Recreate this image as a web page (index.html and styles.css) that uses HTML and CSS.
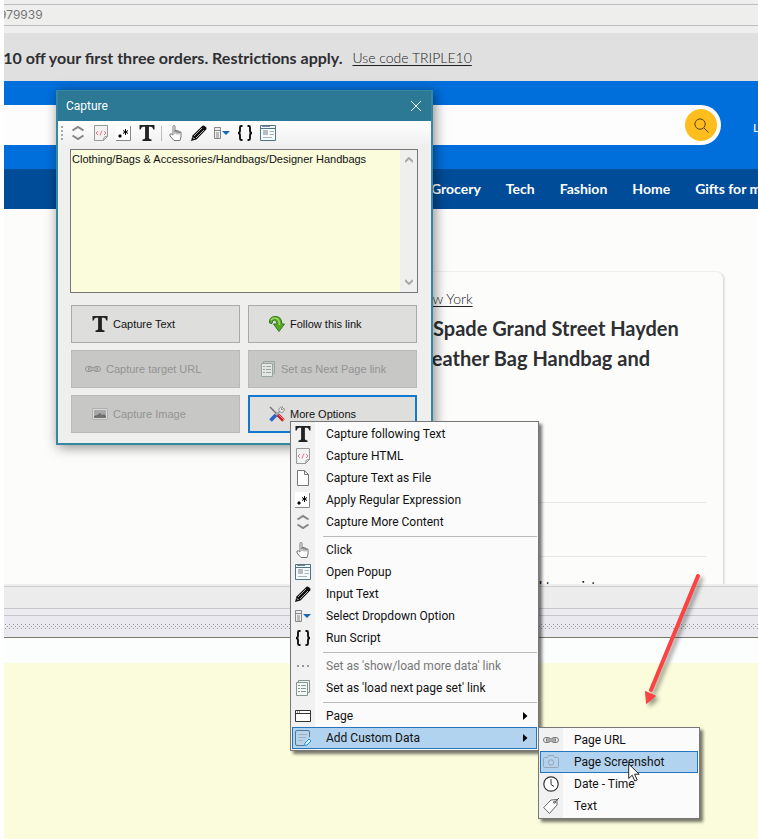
FILE: index.html
```html
<!DOCTYPE html>
<html lang="en">
<head>
<meta charset="utf-8">
<meta name="viewport" content="width=device-width">
<title>Capture</title>
<link rel="stylesheet" href="styles.css">
</head>
<body>
<svg class="sprite" aria-hidden="true">
  <symbol id="more" viewBox="0 0 16 16"><path d="M2.500 5.500L8 2l5.500 3.500M2.500 10.500L8 14l5.500-3.500" fill="none" stroke="#858585" stroke-width="2"/></symbol>
  <symbol id="html" viewBox="0 0 16 16"><path d="M1.500.5h13v11l-4 4h-9z" fill="#f2f2f2" stroke="#999"/><path d="M14.500 11.500q-4-1-4 4z" fill="#ddd" stroke="#999"/><path d="M5 6L3 8l2 2M11 6l2 2-2 2M9 5.500l-2 5" fill="none" stroke="#e8788c"/></symbol>
  <symbol id="regex" viewBox="0 0 16 16"><path d="M0 0h15v15H0z" fill="#fff"/><path d="M14.500 1v14.500H0" fill="none" stroke="#888"/><path d="M3 10h2v2H3z" fill="#000" stroke="#000"/><path d="M9.500 4v6M7 5.500l5 3M12 5.500l-5 3" stroke="#000"/></symbol>
  <symbol id="tee" viewBox="0 0 16 16"><path d="M.5 0h15v4.500h-1.200Q13.700 1.800 12 1.800H9.900V13q0 1.400 2.600 1.500V16h-9v-1.500Q6.100 14.400 6.100 13V1.800H4Q2.300 1.800 1.700 4.500H.5z" fill="#222"/></symbol>
  <symbol id="hand" viewBox="0 0 16 16"><path d="M5 10V1.500q0-1 1-1t1 1V7V5.500h2V7.500V6h2v2V7h2v5l-1 3.500H6L2 11V9h1.500z" fill="#fff" stroke="#777"/><path d="M7 6v3M9 7v2.500M11 7v2.500" stroke="#888"/></symbol>
  <symbol id="pencil" viewBox="0 0 16 16"><path d="M0 16l1.500-5.500L11.500.8q1-.8 2.200.2l1.300 1.300q1 1.200.2 2.200L5.500 14.500z" fill="#111"/><path d="M3 11L11 3M5 13l8-8" stroke="#aaa"/><path d="M2 12.500L3.500 14" stroke="#fff"/></symbol>
  <symbol id="drop" viewBox="0 0 16 16"><path d="M.5 2.500h6v11h-6zM.5 5.500h6M2 8h3M2 10h3M2 12h3" fill="#eee" stroke="#888"/><path d="M8 6h8l-4 4z" fill="#1668b5"/></symbol>
  <symbol id="braces" viewBox="0 0 16 16"><path d="M5.500 1H4Q3 1 3 2.500v3Q3 8 1 8q2 0 2 2.500v3Q3 15 4 15h1.500M10.500 1H12q1 0 1 1.500v3Q13 8 15 8q-2 0-2 2.500v3q0 1.500-1 1.500h-1.500" fill="none" stroke="#111" stroke-width="1.900"/></symbol>
  <symbol id="popup" viewBox="0 0 16 16"><path d="M.5.5h15v15H.5z" fill="#f5fafb" stroke="#527584"/><path d="M1 3.500h14" stroke="#527584"/><path d="M2 1.500h8" stroke="#789"/><path d="M3 5h5v5H3z" fill="#b5bdc2"/><path d="M9.500 6.500H14M9.500 9.500H14M3 12.500h9" stroke="#aab4b9"/></symbol>
  <symbol id="file" viewBox="0 0 16 16"><path d="M2.500.5h7l4 4v11h-11zM9.500.5v4h4" fill="#fff" stroke="#777"/></symbol>
  <symbol id="dots" viewBox="0 0 16 16"><path d="M2 7h2v2H2zM7 7h2v2H7zM12 7h2v2h-2z" fill="#999"/></symbol>
  <symbol id="pages" viewBox="0 0 16 16"><path d="M3.500 2.500v-2h11v12h-2" fill="none" stroke="#829790"/><path d="M1.500 2.500h11v13h-11z" fill="#f4f7f5" stroke="#829790"/><path d="M3 5.500h2M3 8.500h2M3 11.500h2M6 5.500h5M6 8.500h5M6 11.500h5" stroke="#829790"/></symbol>
  <symbol id="window" viewBox="0 0 16 16"><path d="M.5 2.500h15v11H.5zM.5 5.500h15" fill="#fff" stroke="#333"/><path d="M2 4h4" stroke="#333" stroke-dasharray="1 1"/></symbol>
  <symbol id="note" viewBox="0 0 16 16"><path d="M14.500 7V2q0-1.500-1.500-1.500H2Q.5.500.5 2v12Q.5 15.500 2 15.500h7" fill="#b9d3ea" stroke="#52798f"/><path d="M3 4.500h9M3 7.500h8M3 10.500h5" stroke="#9ab4c8"/><path d="M9.500 15.500l.5-2.500 4-4 2 2-4 4z" fill="#dff2ff" stroke="#1e91d6"/></symbol>
  <symbol id="link" viewBox="0 0 16 16"><rect x=".5" y="5.500" width="7" height="5" rx="2.500" fill="none" stroke="#777"/><rect x="8.500" y="5.500" width="7" height="5" rx="2.500" fill="none" stroke="#777"/><path d="M3 8h10" stroke="#777" stroke-width="3"/><path d="M4 8h8" stroke="#ddd"/></symbol>
  <symbol id="camera" viewBox="0 0 16 16"><path d="M.5 4.500q0-1 1-1h3l1-2h5l1 2h3q1 0 1 1v8q0 1-1 1h-13q-1 0-1-1z" fill="none" stroke="#9aa6b2"/><circle cx="8" cy="8.500" r="2.700" fill="none" stroke="#9aa6b2"/></symbol>
  <symbol id="clock" viewBox="0 0 16 16"><circle cx="8" cy="8" r="7.200" fill="#fff" stroke="#333" stroke-width="1.200"/><path d="M8 3v5.500l3 2" fill="none" stroke="#333"/></symbol>
  <symbol id="tag" viewBox="0 0 16 16"><path d="M.7 9.500L8 2l6-.5L14 7l-7.500 8.500z" fill="#fff" stroke="#666"/><circle cx="11.500" cy="4.300" r="1" fill="none" stroke="#555"/><path d="M11.500 4.300L16 0" stroke="#555"/></symbol>
  <symbol id="image" viewBox="0 0 16 16"><path d="M.5 2.500h15v11H.5z" fill="#e5e5e5" stroke="#a5a5a5"/><path d="M2 4h12v8H2z" fill="#999"/><path d="M2 12v-2l3-1 3-2 2 2 2-1 2 2v2z" fill="#444"/></symbol>
  <symbol id="follow" viewBox="0 0 16 16"><path d="M.5 7Q-.2 1.500 5 .6Q12.500-.5 13 8h2.500L10 15.500 4.500 8H8Q8 4.500 5.500 4.200Q3 4 3 7.500z" fill="#55a927" stroke="#34771a"/><path d="M2 4Q4 1.500 7 2.200Q10.500 3 10.500 9" fill="none" stroke="#9dd66b" stroke-width="1.500"/></symbol>
  <symbol id="tools" viewBox="0 0 16 16"><path d="M1 1l7 7" stroke="#777" stroke-width="1.500"/><path d="M8.500 8.500l6 6" stroke="#d4201f" stroke-width="3.500"/><path d="M9.500 8.500l5.500 5.500" stroke="#f3a09c"/><path d="M7 9l4-4" stroke="#aaa" stroke-width="2"/><path d="M14 1l-2 2 1 1 2-2q1 3-1 4.200Q12 7.200 10.500 5.500Q9 4 10.500 2 12 .5 14 1z" fill="#e5e5e5" stroke="#888" stroke-width=".8"/><path d="M7 9l-5.500 5.500" stroke="#2865c5" stroke-width="3.800"/></symbol>
  <symbol id="arrow" viewBox="0 0 16 16"><path d="M6 4l4.500 4L6 12z" fill="#000"/></symbol>
</svg>

<div class="screen">
  <div class="address"><span>979939</span></div>
  <div class="promo"><strong>$10 off your first three orders. Restrictions apply.</strong><a href="#">Use code TRIPLE10</a></div>
  <header class="masthead">
    <form class="search">
      <input type="search" aria-label="Search">
      <button type="button" aria-label="Search"><svg viewBox="0 0 16 16"><circle cx="6.500" cy="6.500" r="5.500"/><path d="M10.500 10.500l5 5"/></svg></button>
    </form>
    <a class="lists" href="#">L</a>
  </header>
  <nav class="departments"><a href="#">Grocery</a><a href="#">Tech</a><a href="#">Fashion</a><a href="#">Home</a><a href="#">Gifts for m</a></nav>
  <main class="content">
    <article class="product">
      <a class="brand" href="#">New York</a>
      <h1><span>Spade Grand Street Hayden</span><span class="second">Leather Bag Handbag and</span></h1>
      <div class="row"></div>
      <div class="row"></div>
      <p>Add to registry</p>
    </article>
  </main>
  <div class="statusbar"></div>
  <div class="gap"></div>
  <div class="splitter"></div>
  <div class="blank"></div>
  <div class="results"></div>
</div>

<section class="dialog" aria-label="Capture">
  <div class="titlebar"><span>Capture</span><button type="button" aria-label="Close"><svg viewBox="0 0 12 12"><path d="M1 1l10 10M11 1L1 11"/></svg></button></div>
  <div class="toolbar">
    <span class="grip"></span>
    <button type="button" aria-label="More content"><svg><use href="#more"/></svg></button>
    <button type="button" aria-label="HTML"><svg><use href="#html"/></svg></button>
    <button type="button" aria-label="Regular expression"><svg><use href="#regex"/></svg></button>
    <button type="button" aria-label="Text"><svg><use href="#tee"/></svg></button>
    <span class="divider"></span>
    <button type="button" aria-label="Click"><svg><use href="#hand"/></svg></button>
    <button type="button" aria-label="Input text"><svg><use href="#pencil"/></svg></button>
    <button type="button" aria-label="Select option"><svg><use href="#drop"/></svg></button>
    <button type="button" aria-label="Run script"><svg><use href="#braces"/></svg></button>
    <button type="button" aria-label="Open popup"><svg><use href="#popup"/></svg></button>
  </div>
  <div class="preview">
    <textarea aria-label="Captured content">Clothing/Bags &amp; Accessories/Handbags/Designer Handbags</textarea>
    <div class="scroll"><svg viewBox="0 0 8 6"><path d="M0 5l4-4 4 4"/></svg><svg viewBox="0 0 8 6"><path d="M0 1l4 4 4-4"/></svg></div>
  </div>
  <div class="actions">
    <div class="column">
      <button type="button" class="inset"><svg><use href="#tee"/></svg>Capture Text</button>
      <button type="button" disabled><svg><use href="#link"/></svg>Capture target URL</button>
      <button type="button" class="inset" disabled><svg><use href="#image"/></svg>Capture Image</button>
    </div>
    <div class="column right">
      <button type="button" class="inset"><svg><use href="#follow"/></svg>Follow this link</button>
      <button type="button" disabled><svg><use href="#pages"/></svg>Set as Next Page link</button>
      <button type="button" class="inset focus"><svg><use href="#tools"/></svg>More Options</button>
    </div>
  </div>
</section>

<div class="menu main-menu">
  <button type="button"><svg><use href="#tee"/></svg>Capture following Text</button>
  <button type="button"><svg><use href="#html"/></svg>Capture HTML</button>
  <button type="button"><svg><use href="#file"/></svg>Capture Text as File</button>
  <button type="button"><svg><use href="#regex"/></svg>Apply Regular Expression</button>
  <button type="button"><svg><use href="#more"/></svg>Capture More Content</button>
  <hr>
  <button type="button"><svg><use href="#hand"/></svg>Click</button>
  <button type="button"><svg><use href="#popup"/></svg>Open Popup</button>
  <button type="button"><svg><use href="#pencil"/></svg>Input Text</button>
  <button type="button"><svg><use href="#drop"/></svg>Select Dropdown Option</button>
  <button type="button"><svg><use href="#braces"/></svg>Run Script</button>
  <hr>
  <button type="button" disabled><svg><use href="#dots"/></svg>Set as 'show/load more data' link</button>
  <button type="button"><svg><use href="#pages"/></svg>Set as 'load next page set' link</button>
  <hr>
  <button type="button"><svg><use href="#window"/></svg>Page<svg class="more"><use href="#arrow"/></svg></button>
  <button type="button" class="selected"><svg><use href="#note"/></svg>Add Custom Data<svg class="more"><use href="#arrow"/></svg></button>
</div>

<div class="menu sub-menu">
  <button type="button"><svg><use href="#link"/></svg>Page URL</button>
  <button type="button" class="selected"><svg><use href="#camera"/></svg>Page Screenshot</button>
  <button type="button"><svg><use href="#clock"/></svg>Date - Time</button>
  <button type="button"><svg><use href="#tag"/></svg>Text</button>
</div>

<svg class="pointer" viewBox="0 0 12 19" aria-hidden="true"><path d="M.7 1v14.500l3.500-3.300 2.600 5.800 2.400-1L6.600 11.200h4.600z" fill="#fff" stroke="#222"/></svg>
<svg class="callout" viewBox="0 0 70 146" aria-hidden="true"><path d="M58 6L11 120" stroke="#fc4343" stroke-width="4" stroke-linecap="round"/><path d="M5.500 121.500l10 4.500L6.500 133.500z" fill="#fc4343" stroke="#fc4343"/></svg>
</body>
</html>
```
FILE: styles.css
```css
* { box-sizing: border-box; }
body { margin: 0; min-height: 100vh; background: #fff; overflow: hidden; font-family: "Liberation Sans", sans-serif; }
button { font: inherit; color: inherit; border: 0; padding: 0; background: none; }
svg { width: 16px; height: 16px; flex: none; }
.sprite { position: absolute; width: 0; height: 0; }

.screen { min-height: 100vh; margin-left: 4px; display: flex; flex-direction: column; overflow: hidden; font-family: Lato, sans-serif; color: #2e2f32; }
.address { height: 33px; padding: 4px 0 7px; background: #eee; flex: none; font: 12px/20px Inter, sans-serif; color: #777; }
.address span { display: block; height: 22px; border: solid #bdbdbd; border-width: 1px 0; background: #eeeeec; text-indent: -5px; }
.promo { height: 48px; flex: none; display: flex; align-items: center; gap: 10px; padding-left: 6px; background: #e0e0e0; font-size: 16px; white-space: nowrap; margin-left: -16px; }
.promo strong { font-weight: 700; }
.promo a { color: #222; font-size: 14px; font-weight: 300; text-underline-offset: 2px; }
.masthead { height: 88px; flex: none; display: flex; align-items: center; gap: 32px; background: #006fdc; overflow: hidden; }
.search { height: 40px; flex: 1; display: flex; align-items: center; padding-right: 4px; background: #fdfdfd; border-radius: 0 20px 20px 0; }
.search input { flex: 1; min-width: 0; border: 0; background: none; height: 32px; }
.search button { width: 32px; height: 32px; border-radius: 50%; background: #ffbd1e; display: grid; place-items: center; }
.search svg { width: 15px; height: 15px; fill: none; stroke: #463816; }
.lists { color: #fff; font-size: 12px; font-weight: 400; text-decoration: none; width: 5px; padding-top: 4px; }
.departments { height: 40px; flex: none; display: flex; align-items: center; gap: 25px; padding: 0 0 2px 427px; background: #004c98; font-size: 14px; font-weight: 700; white-space: nowrap; }
.departments a { color: #fff; text-decoration: none; }
.content { height: 375px; flex: none; padding: 62px 34px 0 52px; background: #fcfdfb; overflow: hidden; }
.product { height: 340px; border: 1px solid #eee; border-left: 0; border-right-color: #ddd; border-radius: 8px; box-shadow: 1px 1px 2px #e5e5e5; padding: 18px 17px 0 357px; }
.brand { display: block; font-size: 14px; font-weight: 300; line-height: 18px; text-indent: 2px; color: #222; text-underline-offset: 2px; }
h1 { margin: 5px 0 0; font-size: 20px; line-height: 30px; white-space: nowrap; }
h1 span { display: block; text-indent: 20px; }
h1 .second { text-indent: 9px; }
.row { height: 54px; border-bottom: 1px solid #e7e7e7; }
.row:first-of-type { height: 130px; }
.product p { margin: 19px 0 0; padding-left: 104px; font-size: 14px; line-height: 20px; color: #000; }
.statusbar { height: 25px; flex: none; border-top: 2px solid #eee; border-bottom: 1px solid #c7c7cb; background: linear-gradient(#cfcfcb 1px, #ececec 1px); }
.gap { height: 7px; flex: none; background: #ebebf0; border-bottom: 1px solid #c7c7cb; }
.splitter { height: 22px; flex: none; padding: 8px 0; border-bottom: 1px solid #7b7b6d; background: #eae9ef; }
.splitter::before { content: ""; display: block; height: 5px; --dot: linear-gradient(90deg, #999 1px, #0000 1px); background: var(--dot) 1px 0/4px 1px repeat-x, var(--dot) 3px 2px/4px 1px repeat-x, var(--dot) 1px 4px/4px 1px repeat-x; }
.blank { height: 25px; flex: none; background: #fcfdfd; }
.results { flex: 1; background: #fafcdc; }

.dialog { position: absolute; left: 56px; top: 90px; width: 377px; border: 2px solid #3488a0; border-top: 0; background: #efefee; box-shadow: 2px 2px 12px #0007; font-size: 12px; padding-bottom: 10px; }
.titlebar { height: 31px; display: flex; align-items: center; justify-content: space-between; padding: 0 9px 0 8px; border-top: 1px solid #3488a0; background: #2b7994; color: #fff; font: 12px Roboto, sans-serif; }
.titlebar svg { display: block; width: 12px; height: 12px; stroke: #fff; fill: none; }
.toolbar { height: 24px; display: flex; align-items: center; gap: 7px; padding-left: 3px; background: linear-gradient(#fff, #f0f0f0); }
.toolbar svg { display: block; }
.grip { width: 2px; height: 14px; background: repeating-linear-gradient(#aaa 0 2px, #fff0 2px 4px); }
.divider { width: 1px; height: 15px; margin: 0 -1px; background: #bbb; }
.preview { margin: 4px 13px 0 12px; height: 144px; display: flex; border: 1px solid #777; background: #fafcdc; }
.preview textarea { flex: 1; min-width: 0; border: 0; padding: 2px 1px; resize: none; overflow: hidden; background: none; font: 11px/14px "Liberation Sans", sans-serif; color: #111; }
.scroll { width: 17px; display: flex; flex-direction: column; justify-content: space-between; align-items: center; padding: 7px 0; background: #efefef; }
.scroll svg { width: 8px; height: 6px; fill: none; stroke: #aaa; stroke-width: 2; }
.actions { display: grid; grid-template-columns: 1fr 1fr; gap: 8px; margin: 12px 14px 0 13px; font-size: 11px; }
.column { display: grid; grid-template-rows: 38px 38px 38px; row-gap: 7px; }
.actions button { display: flex; align-items: center; gap: 5px; padding-left: 13px; border: 1px solid #a9a9a9; background: #dededd; color: #111; }
.actions .right button { padding-left: 11px; }
.actions .column .inset { padding-left: 20px; }
.actions .column .focus { padding-left: 19px; border: 2px solid #1378d0; }
.actions button:disabled { background: #c7c7c6; border-color: #bababa; color: #949494; }
.actions button:disabled svg { opacity: .65; }

.menu { position: absolute; padding: 1px; border: 1px solid #777; background: linear-gradient(90deg, #f1f1f1 24px, #fbfbfb 24px); box-shadow: 3px 3px 3px #0008; font: 12px Roboto, sans-serif; color: #111; }
.main-menu { left: 290px; top: 421px; width: 249px; }
.sub-menu { left: 538px; top: 727px; width: 162px; }
.menu button { display: flex; align-items: center; gap: 15px; width: 100%; height: 22px; padding: 0 3px 0 2px; border: 1px solid #0000; white-space: nowrap; }
.menu .selected { background: #b2d3ef; border-color: #2475b9; }
.menu button:disabled { color: #777; }
.menu .more { margin-left: auto; }
.menu hr { height: 1px; margin: 3px 0 2px 31px; border: 0; background: #bbb; }
.pointer { position: absolute; left: 628px; top: 763px; width: 12px; height: 19px; }
.callout { position: absolute; left: 640px; top: 570px; width: 70px; height: 146px; filter: drop-shadow(3px 3px 2px #0006); pointer-events: none; fill: none; }
```
